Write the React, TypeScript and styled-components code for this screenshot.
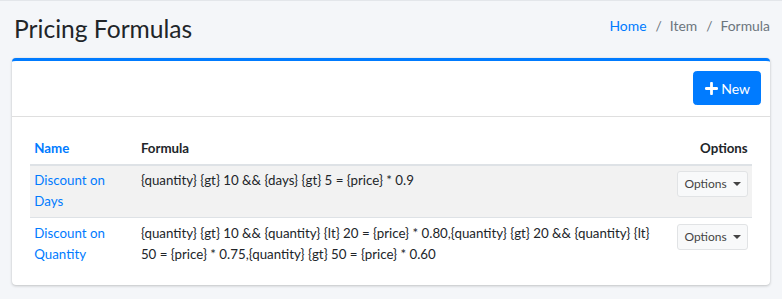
import React from "react";
import styled, { createGlobalStyle } from "styled-components";

const GlobalStyle = createGlobalStyle`
  html, body {
    margin: 0;
    padding: 0;
    background: #f4f6f9;
    font-family: Lato, "Noto Sans", "Liberation Sans", sans-serif;
    font-size: 13.3px;
    line-height: 1.5;
    color: #212529;
  }
`;

const Page = styled.div`
  border-top: 1px solid #e3e6ea;
  padding: 0 12px;
  min-height: 298px;
  box-sizing: border-box;
`;

const ContentHeader = styled.div`
  display: flex;
  justify-content: space-between;
  align-items: flex-start;
  padding: 12px 0 14px 2px;
`;

const Title = styled.h1`
  margin: 0;
  font-size: 24.6px;
  line-height: 31px;
  font-weight: 400;
  color: #212529;
`;

const Breadcrumb = styled.ol`
  display: flex;
  list-style: none;
  margin: 0;
  padding: 2px 0 0;
  font-size: 13.9px;
  line-height: 21.6px;
`;

const Crumb = styled.li<{ $active?: boolean; $first?: boolean }>`
  color: ${(p) => (p.$active ? "#6c757d" : "#007bff")};
  ${(p) =>
    !p.$first &&
    `
    padding-left: 9px;
    &::before {
      content: "/";
      color: #6c757d;
      padding-right: 8px;
    }
  `}
`;

const Card = styled.div`
  background: #fff;
  border-top: 3px solid #007bff;
  border-radius: 4px;
  box-shadow: 0 0 1px rgba(0, 0, 0, 0.125), 0 1px 3px rgba(0, 0, 0, 0.2);
`;

const CardHeader = styled.div`
  display: flex;
  justify-content: flex-end;
  padding: 10px 9px 11px 18px;
  border-bottom: 1px solid rgba(0, 0, 0, 0.125);
`;

const PrimaryButton = styled.button`
  display: inline-flex;
  align-items: center;
  gap: 3px;
  height: 34px;
  padding: 0 10px 0 11px;
  background: #007bff;
  border: 1px solid #007bff;
  border-radius: 3.6px;
  color: #fff;
  font-family: inherit;
  font-size: 14px;
  cursor: pointer;
`;

const CardBody = styled.div`
  padding: 17px 18px 15px;
`;

const Table = styled.table`
  width: 100%;
  border-collapse: collapse;
  table-layout: fixed;
`;

const HeadCell = styled.th<{ $align?: string; $width?: string }>`
  text-align: ${(p) => p.$align || "left"};
  width: ${(p) => p.$width || "auto"};
  padding: 4px 4.3px;
  font-weight: 700;
  line-height: 21.6px;
  border-bottom: 2px solid #dee2e6;
  vertical-align: bottom;
`;

const SortLink = styled.a`
  color: #007bff;
  text-decoration: none;
`;

const Row = styled.tr<{ $striped?: boolean }>`
  background: ${(p) => (p.$striped ? "rgba(0,0,0,0.05)" : "transparent")};
`;

const Cell = styled.td<{ $align?: string }>`
  text-align: ${(p) => p.$align || "left"};
  padding: 4.3px;
  border-top: 1px solid #dee2e6;
  vertical-align: top;
  line-height: 21.6px;
`;

const NameLink = styled.a`
  color: #007bff;
  text-decoration: none;
`;

const OptionsButton = styled.button`
  display: inline-flex;
  align-items: center;
  margin-top: 1px;
  height: 26px;
  padding: 0 6px;
  background: #f8f9fa;
  border: 1px solid #e1e3e5;
  border-radius: 3px;
  color: #444;
  font-family: inherit;
  font-size: 12px;
  cursor: pointer;
  &::after {
    content: "";
    margin-left: 6px;
    border-top: 4px solid #444;
    border-left: 4px solid transparent;
    border-right: 4px solid transparent;
  }
`;

const PlusIcon = () => (
  <svg width="13" height="13" viewBox="0 0 13 13">
    <path d="M6.5 1.2v10.6M1.2 6.5h10.6" stroke="#fff" strokeWidth="2.8" strokeLinecap="round" />
  </svg>
);

const rows = [
  {
    name: "Discount on Days",
    formula: "{quantity} {gt} 10 && {days} {gt} 5 = {price} * 0.9",
  },
  {
    name: "Discount on Quantity",
    formula:
      "{quantity} {gt} 10 && {quantity} {lt} 20 = {price} * 0.80,{quantity} {gt} 20 && {quantity} {lt} 50 = {price} * 0.75,{quantity} {gt} 50 = {price} * 0.60",
  },
];

export default function App() {
  return (
    <>
      <GlobalStyle />
      <Page>
        <ContentHeader>
          <Title>Pricing Formulas</Title>
          <Breadcrumb>
            <Crumb $first>Home</Crumb>
            <Crumb $active>Item</Crumb>
            <Crumb $active>Formula</Crumb>
          </Breadcrumb>
        </ContentHeader>
        <Card>
          <CardHeader>
            <PrimaryButton>
              <PlusIcon />
              New
            </PrimaryButton>
          </CardHeader>
          <CardBody>
            <Table>
              <thead>
                <tr>
                  <HeadCell $width="98px">
                    <SortLink href="#">Name</SortLink>
                  </HeadCell>
                  <HeadCell>Formula</HeadCell>
                  <HeadCell $align="right" $width="71px">
                    Options
                  </HeadCell>
                </tr>
              </thead>
              <tbody>
                {rows.map((r, i) => (
                  <Row key={r.name} $striped={i % 2 === 0}>
                    <Cell>
                      <NameLink href="#">{r.name}</NameLink>
                    </Cell>
                    <Cell>{r.formula}</Cell>
                    <Cell $align="right">
                      <OptionsButton>Options</OptionsButton>
                    </Cell>
                  </Row>
                ))}
              </tbody>
            </Table>
          </CardBody>
        </Card>
      </Page>
    </>
  );
}
